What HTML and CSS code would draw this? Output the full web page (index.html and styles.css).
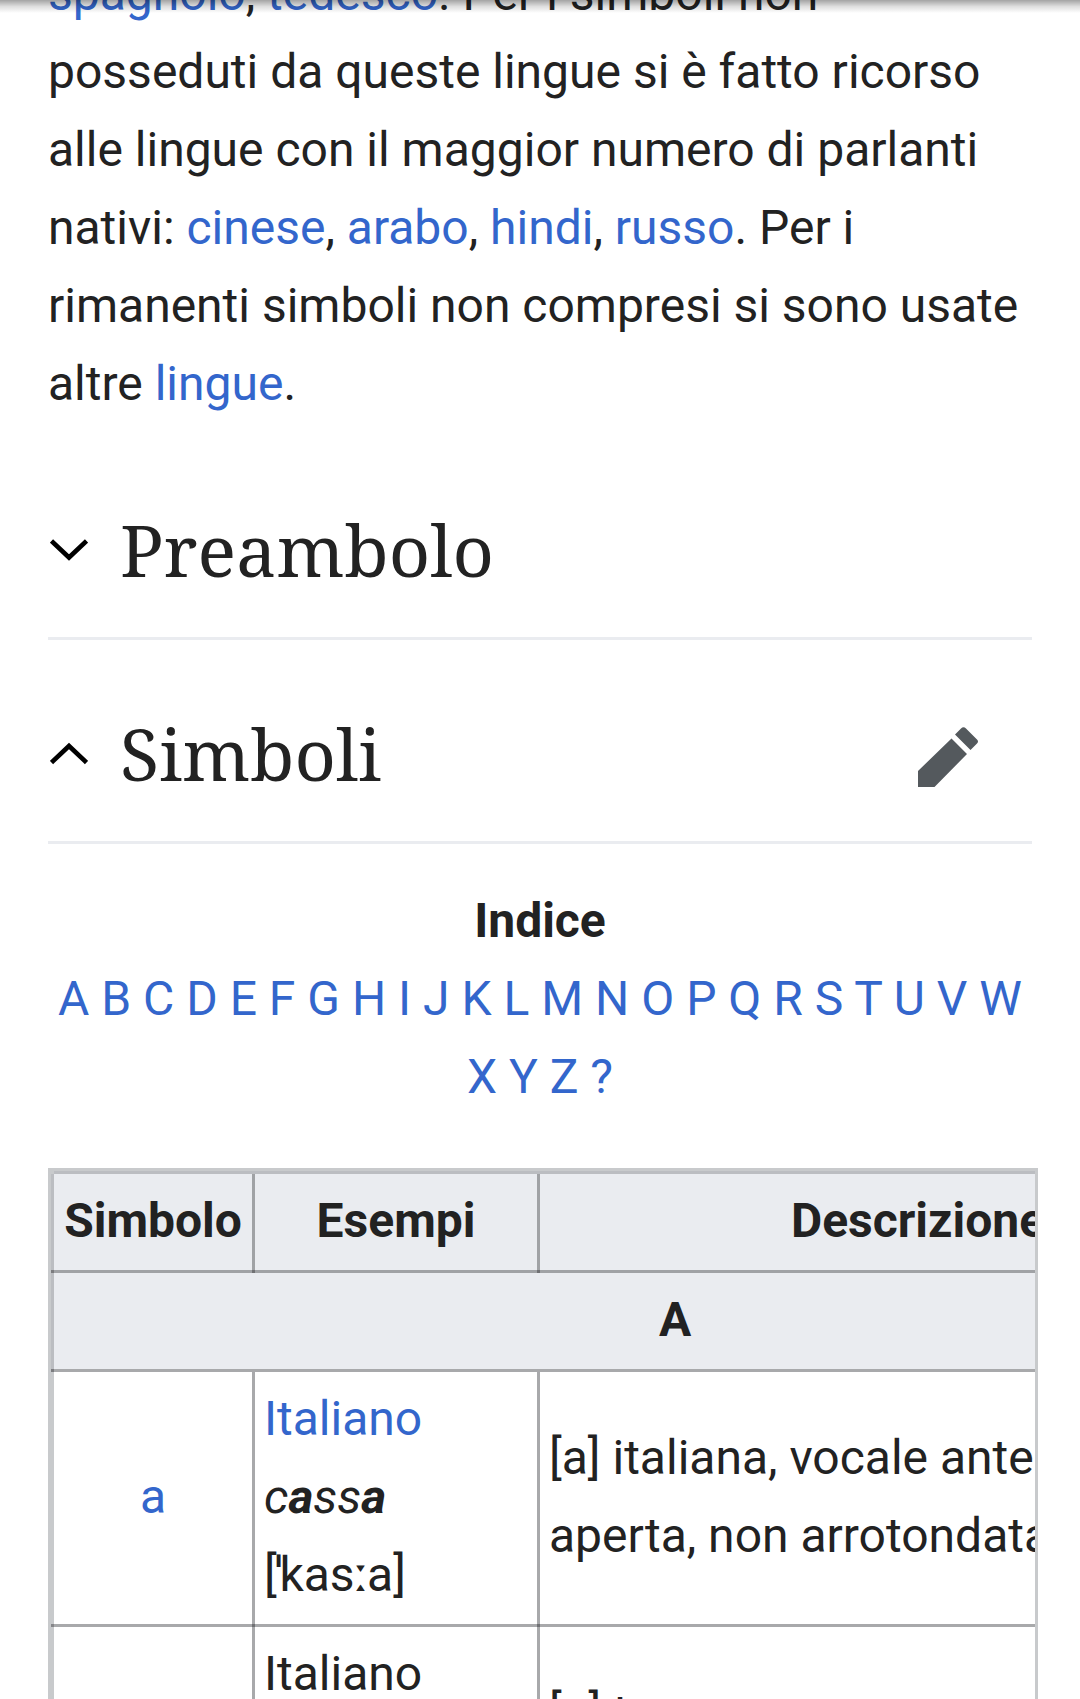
FILE: index.html
```html
<!DOCTYPE html>
<html lang="it">
<head>
<meta charset="utf-8">
<title>Simboli</title>
<link rel="stylesheet" href="styles.css">
</head>
<body>
<div class="top-shadow"></div>
<main class="page">
  <p class="intro"><a>spagnolo</a>, <a>tedesco</a>. Per i simboli non<br>posseduti da queste lingue si è fatto ricorso<br>alle lingue con il maggior numero di parlanti<br>nativi: <a>cinese</a>, <a>arabo</a>, <a>hindi</a>, <a>russo</a>. Per i<br>rimanenti simboli non compresi si sono usate<br>altre <a>lingue</a>.</p>
  <section class="section">
    <svg class="chevron" viewBox="0 0 38 24"><path d="M1.500 3 19 19.500 36.500 3" fill="none" stroke="#000" stroke-width="4.600"/></svg>
    <h2>Preambolo</h2>
  </section>
  <section class="section">
    <svg class="chevron" viewBox="0 0 38 24"><path d="M1.500 20.500 19 4 36.500 20.500" fill="none" stroke="#000" stroke-width="4.600"/></svg>
    <h2>Simboli</h2>
    <svg class="pencil" viewBox="0 0 60 60"><path d="M0 44V60H16.500L49 27 33.500 11.500ZM37 7.500 52.500 23 59 16.500Q61 14.500 59 12.500L48 1.500Q45.500-1 43 1.500Z" fill="#54595d"/></svg>
  </section>
  <nav class="index">
    <b>Indice</b><br>
    <a>A</a> <a>B</a> <a>C</a> <a>D</a> <a>E</a> <a>F</a> <a>G</a> <a>H</a> <a>I</a> <a>J</a> <a>K</a> <a>L</a> <a>M</a> <a>N</a> <a>O</a> <a>P</a> <a>Q</a> <a>R</a> <a>S</a> <a>T</a> <a>U</a> <a>V</a> <a>W</a><br>
    <a>X</a> <a>Y</a> <a>Z</a> <a>?</a>
  </nav>
  <div class="table-wrap">
    <table>
      <colgroup><col class="col-symbol"><col class="col-examples"><col class="col-description"></colgroup>
      <tr><th>Simbolo</th><th>Esempi</th><th>Descrizione</th></tr>
      <tr><th colspan="3" class="letter">A</th></tr>
      <tr><td class="symbol"><a>a</a></td><td><a>Italiano</a><br><i>c<b>a</b>ss<b>a</b></i><br>[<span class="stress">ˈ</span>kas<span class="long">ː</span>a]</td><td>[a] italiana, vocale anteriore<br>aperta, non arrotondata</td></tr>
      <tr><td class="symbol"></td><td>Italiano<br><br><br></td><td>[ɐ] tra a e<br>&nbsp;</td></tr>
    </table>
  </div>
</main>
</body>
</html>
```
FILE: styles.css
```css
* { box-sizing: border-box; }
html, body { height: 1699px; overflow: hidden; }
body {
  margin: 0;
  background: #fff;
  color: #222;
  font: 48px/78px Roboto, sans-serif;
}
a { color: #36c; }
.page { padding: 0 48px; }
.top-shadow {
  position: absolute;
  z-index: 2;
  top: 0;
  left: 0;
  width: 100%;
  height: 13px;
  background: linear-gradient(rgba(0,0,0,.36), rgba(0,0,0,.13) 50%, transparent);
}
.intro { margin: -45px 0 13px; white-space: nowrap; }
.section {
  display: flex;
  align-items: center;
  height: 204px;
  border-bottom: 3px solid #eaecf0;
}
.chevron { width: 38px; height: 24px; margin: 26px 32px 0 2px; }
h2 { margin: 25px 0 0; font: 400 72px/94px "Noto Serif", "Droid Serif", serif; }
.pencil { width: 60px; height: 60px; margin: 32px 54px 0 auto; }
.index { margin: 38px -8px 52px; text-align: center; white-space: nowrap; }
.table-wrap {
  width: 990px;
  height: 540px;
  overflow: hidden;
  border: 3px solid #c8cacc;
  border-bottom: 0;
}
table {
  width: 1248px;
  table-layout: fixed;
  border-spacing: 0;
  border: solid #c8cacc;
  border-width: 3px 0 0 3px;
}
tr:first-child th { box-shadow: 0 -3px #bbbdc1; }
.col-symbol { width: 201px; }
.col-examples { width: 285px; }
th, td {
  position: relative;
  padding: 8px 9px 10px;
  border: solid #a8a9ab;
  border-width: 0 3px 3px 0;
  white-space: nowrap;
  text-align: left;
}
th { background: #eaecf0; border-color: #a0a2a5; text-align: center; }
.letter { border-bottom-color: #a8a9ab; }
/* left edge of each row, ending in the darker crossing square */
th:first-child::before, td:first-child::before {
  content: "";
  position: absolute;
  top: 0;
  bottom: -3px;
  left: -3px;
  width: 3px;
  background: linear-gradient(to top, #7b7c7f 3px, #bbbdc1 3px);
}
td:first-child::before { background: linear-gradient(to top, #858689 3px, #c8cacc 3px); }
/* darker squares where the cell borders cross */
td:not(:last-child)::after, th:not(:last-child)::after {
  content: "";
  position: absolute;
  right: -3px;
  bottom: -3px;
  width: 3px;
  height: 3px;
  background: #707174;
}
.symbol { text-align: center; }
.stress, .long { font-family: "Noto Sans", sans-serif; line-height: 1; }
.stress { margin: 0 -3px 0 -2px; }
.long { margin: 0 -1px 0 -2px; }
```
